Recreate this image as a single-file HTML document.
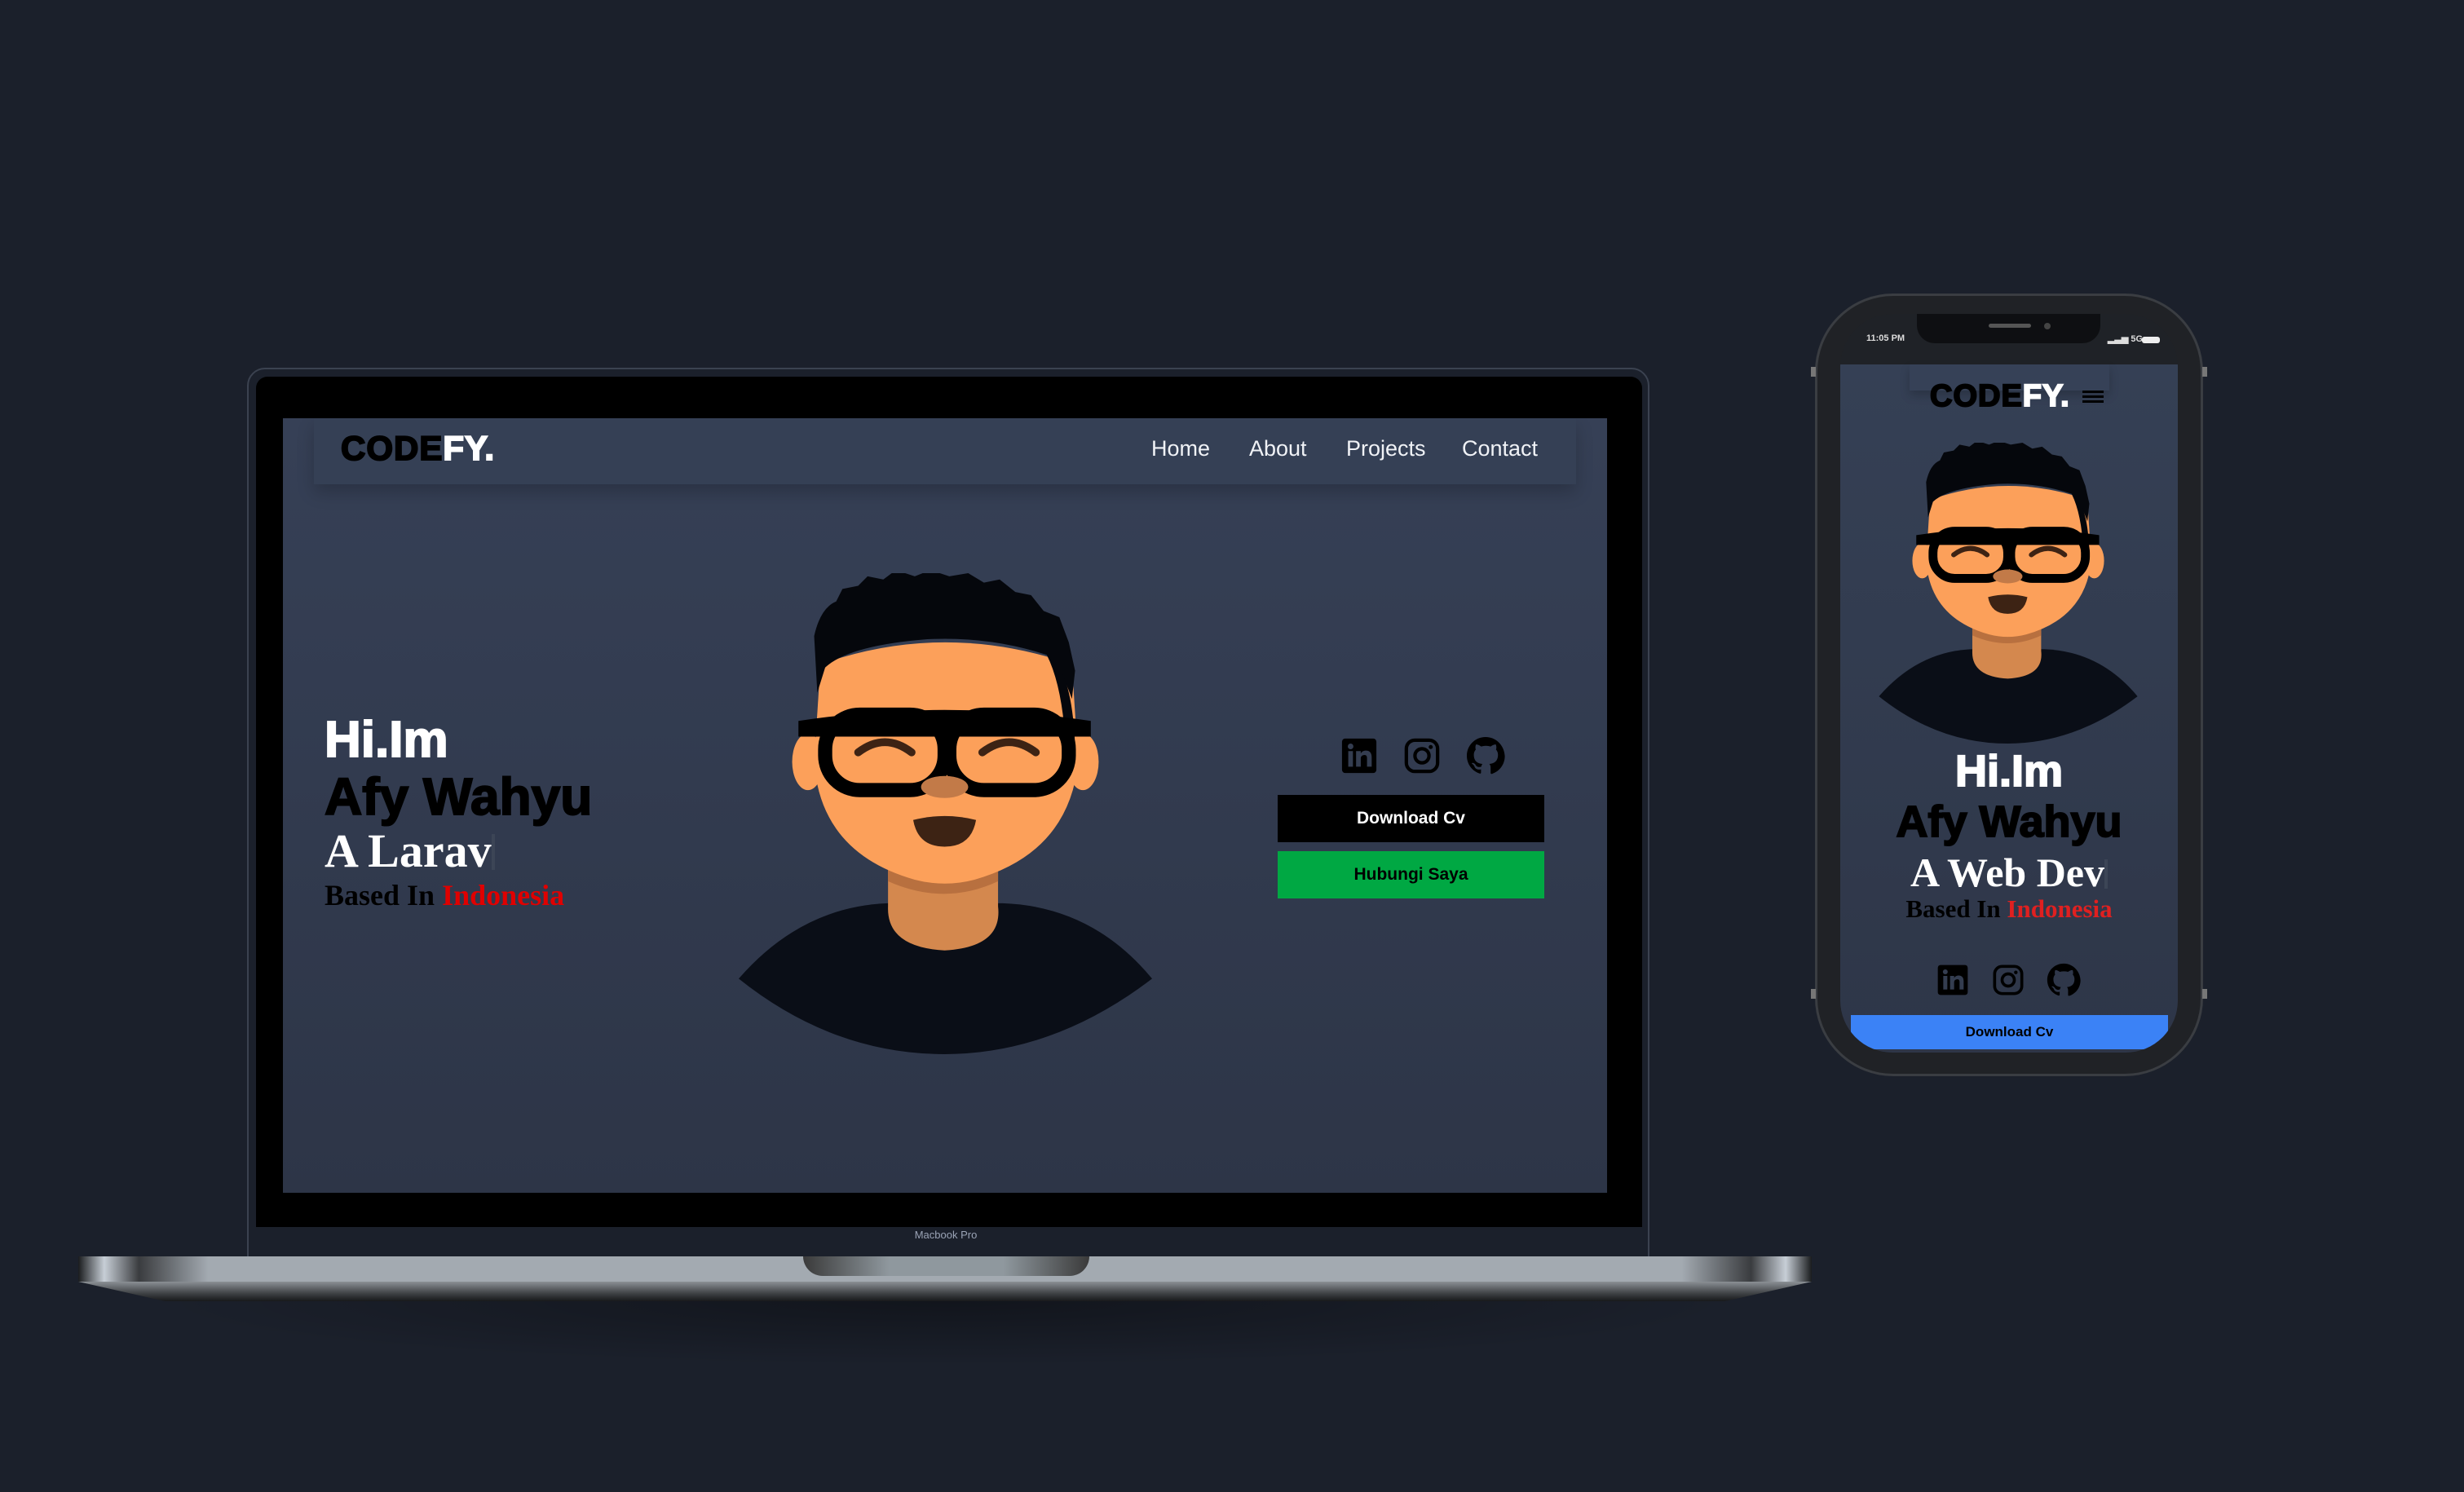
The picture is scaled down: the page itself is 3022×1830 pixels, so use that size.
<!DOCTYPE html>
<html><head><meta charset="utf-8"><style>
*{margin:0;padding:0;box-sizing:border-box}
body{width:3022px;height:1830px;background:#1b202b;position:relative;overflow:hidden;font-family:"Liberation Sans",sans-serif}
.abs{position:absolute}
.logo{font-weight:900;letter-spacing:1px;color:#000;font-family:"Liberation Sans",sans-serif;-webkit-text-stroke:2px #000}
.logo span{color:#fff;-webkit-text-stroke:2px #fff}
.nav a{position:absolute;color:#f0f2f6;font-size:27px;text-decoration:none;top:535px}
.serif{font-family:"Liberation Serif",serif;font-weight:bold}
.hb{-webkit-text-stroke:2px currentColor}
</style></head><body>
<svg width="0" height="0" style="position:absolute">
<defs>
<symbol id="av" viewBox="0 0 263 306">
<path d="M0,258 Q40,212 95,210 L168,210 Q225,212 263,258 Q200,306 131,306 Q60,306 0,258Z" fill="#0a0e17"/>
<path d="M95,170 L165,170 L165,212 Q168,238 131,240 Q94,238 95,212Z" fill="#d4884e"/>
<path d="M95,180 Q131,200 165,180 L165,196 Q131,212 95,196Z" fill="#b8703f"/>
<ellipse cx="44" cy="120" rx="10" ry="18" fill="#fca05a"/>
<ellipse cx="219" cy="120" rx="10" ry="18" fill="#fca05a"/>
<path d="M52,58 Q131,30 212,58 L216,120 Q210,178 150,195 Q131,200 112,195 Q52,178 48,120Z" fill="#fca05a"/>
<path d="M50,76 L48,40 Q52,22 62,18 L66,10 L76,8 L82,2 L92,4 L100,-2 L112,2 L122,-2 L134,2 L146,0 L156,6 L166,4 L176,12 L186,14 L194,24 L204,28 L210,44 L214,62 L212,80 Q205,60 196,52 Q160,40 120,42 Q70,46 55,60Z" fill="#05070c"/>
<path d="M196,52 Q212,60 214,110 L208,110 Q206,72 196,52Z" fill="#05070c"/>
<path d="M38,94 Q131,80 224,94 L224,104 L38,104Z" fill="#000"/>
<rect x="55" y="90" width="76" height="48" rx="22" fill="none" stroke="#000" stroke-width="9"/>
<rect x="134" y="90" width="76" height="48" rx="22" fill="none" stroke="#000" stroke-width="9"/>
<path d="M76,114 Q93,101 110,114" fill="none" stroke="#3d2314" stroke-width="5" stroke-linecap="round"/>
<path d="M155,114 Q172,101 189,114" fill="none" stroke="#3d2314" stroke-width="5" stroke-linecap="round"/>
<ellipse cx="131" cy="136" rx="15" ry="7" fill="#c27a48"/>
<path d="M111,157 Q131,152 151,157 Q148,174 131,174 Q114,174 111,157Z" fill="#3d2314"/>
</symbol>
<symbol id="li" viewBox="0 0 24 24"><rect x="1" y="1" width="22" height="22" rx="2" fill="#000"/><rect x="5" y="9" width="3" height="10" fill="#343d50"/><circle cx="6.5" cy="6" r="1.8" fill="#343d50"/><path d="M10,9h3v1.5c.7-1.1 1.8-1.8 3.3-1.8 2.5 0 3.7 1.6 3.7 4.3V19h-3v-5.5c0-1.3-.5-2-1.6-2-1.2 0-2.4.7-2.4 2.2V19h-3Z" fill="#343d50"/></symbol>
<symbol id="ig" viewBox="0 0 24 24"><rect x="2" y="2" width="20" height="20" rx="5.5" fill="none" stroke="#000" stroke-width="2.2"/><circle cx="12" cy="12" r="4.5" fill="none" stroke="#000" stroke-width="2.2"/><circle cx="17.6" cy="6.4" r="1.3" fill="#000"/></symbol>
<symbol id="gh" viewBox="0 0 24 24"><path fill="#000" d="M12 .5C5.6.5.5 5.6.5 12c0 5.1 3.3 9.4 7.9 10.9.6.1.8-.2.8-.6v-2c-3.2.7-3.9-1.5-3.9-1.5-.5-1.3-1.3-1.7-1.3-1.7-1-.7.1-.7.1-.7 1.2.1 1.8 1.2 1.8 1.2 1 1.8 2.8 1.3 3.5 1 .1-.8.4-1.3.7-1.6-2.6-.3-5.3-1.3-5.3-5.7 0-1.3.5-2.3 1.2-3.1-.1-.3-.5-1.5.1-3.1 0 0 1-.3 3.2 1.2a11 11 0 0 1 5.8 0c2.2-1.5 3.2-1.2 3.2-1.2.6 1.6.2 2.8.1 3.1.7.8 1.2 1.8 1.2 3.1 0 4.4-2.7 5.4-5.3 5.7.4.4.8 1.1.8 2.2v3.3c0 .3.2.7.8.6 4.6-1.5 7.9-5.8 7.9-10.9C23.5 5.6 18.4.5 12 .5Z"/></symbol>
</defs></svg>

<div class="abs" style="left:180px;top:1596px;width:1960px;height:80px;background:radial-gradient(ellipse at 50% 0,rgba(0,0,0,.35),rgba(0,0,0,0) 70%)"></div>
<div class="abs" style="left:303px;top:451px;width:1720px;height:1100px;background:#1b202b;border:2px solid #3b4250;border-radius:22px 22px 0 0"></div>
<div class="abs" style="left:314px;top:462px;width:1700px;height:1043px;background:#000;border-radius:14px 14px 0 0"></div>
<div class="abs" style="left:347px;top:513px;width:1624px;height:950px;background:linear-gradient(#364056,#2d3547)"></div>
<div class="abs" style="left:1080px;top:1507px;width:160px;text-align:center;color:#9aa3b5;font-size:13px">Macbook Pro</div>
<div class="abs" style="left:96px;top:1541px;width:2126px;height:31px;background:linear-gradient(90deg,#1a1c1e 0%,#c7ced6 1.5%,#3a3c3f 3.5%,#a3aab1 7.5%,#a3aab1 92.5%,#3a3c3f 96.5%,#c7ced6 98.5%,#1a1c1e 100%)"></div>
<div class="abs" style="left:985px;top:1541px;width:351px;height:24px;border-radius:0 0 30px 30px;background:linear-gradient(90deg,#3a3a3a,#8f989e 30%,#8f989e 70%,#3a3a3a)"></div>
<div class="abs" style="left:96px;top:1572px;width:2126px;height:24px;background:linear-gradient(#8b9095,#3f4245 60%,#18191b);clip-path:polygon(0 0,100% 0,95% 100%,5% 100%)"></div>

<div class="abs" style="left:385px;top:513px;width:1548px;height:81px;background:#354055;box-shadow:0 10px 20px rgba(0,0,0,.2)"></div>
<div class="abs logo" style="left:418px;top:526px;font-size:42px">CODE<span>FY.</span></div>
<div class="nav">
<a style="left:1412px">Home</a><a style="left:1532px">About</a><a style="left:1651px">Projects</a><a style="left:1793px">Contact</a>
</div>
<div class="abs hb" style="left:398px;top:872px;color:#fff;font-size:62px;font-weight:900">Hi.Im</div>
<div class="abs hb" style="left:398px;top:940px;color:#000;font-size:64px;font-weight:900">Afy Wahyu</div>
<div class="abs serif" style="left:398px;top:1010px;color:#fff;font-size:58px">A Larav<span style="display:inline-block;width:4px;height:44px;background:#3c4556;vertical-align:-4px"></span></div>
<div class="abs serif" style="left:398px;top:1077px;color:#000;font-size:36px">Based In <span style="color:#e00000">Indonesia</span></div>
<svg class="abs" style="left:906px;top:703px" width="507" height="590"><use href="#av"/></svg>
<svg class="abs" style="left:1644px;top:904px" width="46" height="46"><use href="#li"/></svg>
<svg class="abs" style="left:1721px;top:904px" width="46" height="46"><use href="#ig"/></svg>
<svg class="abs" style="left:1798px;top:903px" width="48" height="48"><use href="#gh"/></svg>
<div class="abs" style="left:1567px;top:975px;width:327px;height:58px;background:#000;color:#fff;font-weight:bold;font-size:21px;text-align:center;line-height:58px">Download Cv</div>
<div class="abs" style="left:1567px;top:1044px;width:327px;height:58px;background:#00a843;color:#000;font-weight:bold;font-size:21px;text-align:center;line-height:58px">Hubungi Saya</div>

<div class="abs" style="left:2226px;top:360px;width:476px;height:960px;background:#202226;border:3px solid #3a3d42;border-radius:96px"></div>
<div class="abs" style="left:2221px;top:450px;width:6px;height:12px;background:#777"></div>
<div class="abs" style="left:2701px;top:450px;width:6px;height:12px;background:#777"></div>
<div class="abs" style="left:2221px;top:1213px;width:6px;height:12px;background:#777"></div>
<div class="abs" style="left:2701px;top:1213px;width:6px;height:12px;background:#777"></div>
<div class="abs" style="left:2257px;top:385px;width:414px;height:906px;background:#1f2227;border-radius:64px;overflow:hidden">
  <div class="abs" style="left:0;top:62px;width:414px;height:844px;background:linear-gradient(#354055,#2e3648)"></div>
  <div class="abs" style="left:94px;top:0;width:225px;height:36px;background:#0e0f12;border-radius:0 0 22px 22px"></div>
  <div class="abs" style="left:182px;top:12px;width:52px;height:5px;background:#555;border-radius:3px"></div>
  <div class="abs" style="left:250px;top:11px;width:8px;height:8px;background:#444;border-radius:50%"></div>
  <div class="abs" style="left:32px;top:24px;color:#ddd;font-size:11px;font-weight:bold">11:05 PM</div>
  <div class="abs" style="left:328px;top:24px;color:#ddd;font-size:11px;font-weight:bold">▂▃▅ 5G</div>
  <div class="abs" style="left:370px;top:28px;width:22px;height:8px;background:#eee;border-radius:3px"></div>
  <div class="abs" style="left:85px;top:62px;width:245px;height:32px;background:#364157;box-shadow:0 6px 12px rgba(0,0,0,.2)"></div>
  <div class="abs logo" style="left:110px;top:80px;font-size:38px">CODE<span>FY.</span></div>
  <div class="abs" style="left:297px;top:94px;width:26px;height:3px;background:#000;box-shadow:0 6px 0 #000,0 12px 0 #000"></div>
  <svg class="abs" style="left:47px;top:158px" width="318" height="369"><use href="#av"/></svg>
  <div class="abs hb" style="left:0;top:530px;width:414px;text-align:center;color:#fff;font-size:54px;font-weight:900">Hi.Im</div>
  <div class="abs hb" style="left:0;top:592px;width:414px;text-align:center;color:#000;font-size:54px;font-weight:900">Afy Wahyu</div>
  <div class="abs serif" style="left:0;top:656px;width:414px;text-align:center;color:#fff;font-size:50px">A Web Dev<span style="display:inline-block;width:4px;height:36px;background:#3c4556;vertical-align:-3px"></span></div>
  <div class="abs serif" style="left:0;top:712px;width:414px;text-align:center;color:#000;font-size:31px">Based In <span style="color:#e02020">Indonesia</span></div>
  <svg class="abs" style="left:118px;top:797px" width="40" height="40"><use href="#li"/></svg>
  <svg class="abs" style="left:186px;top:797px" width="40" height="40"><use href="#ig"/></svg>
  <svg class="abs" style="left:253px;top:796px" width="42" height="42"><use href="#gh"/></svg>
  <div class="abs" style="left:13px;top:860px;width:389px;height:42px;background:#3b82f6;color:#000;font-weight:bold;font-size:17px;text-align:center;line-height:42px">Download Cv</div>
</div>
</body></html>
